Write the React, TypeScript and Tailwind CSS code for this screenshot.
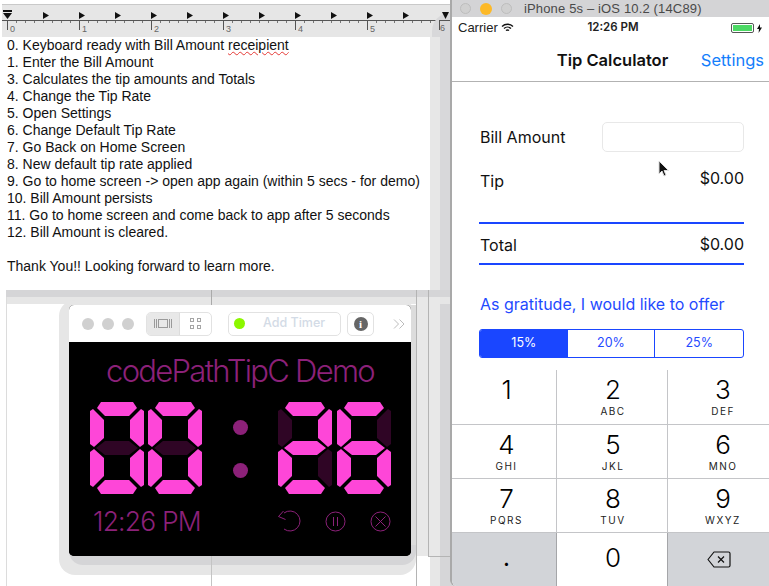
import React from "react";

const lines = [
  "1. Enter the Bill Amount",
  "3. Calculates the tip amounts and Totals",
  "4. Change the Tip Rate",
  "5. Open Settings",
  "6. Change Default Tip Rate",
  "7. Go Back on Home Screen",
  "8. New default tip rate applied",
  "9. Go to home screen -> open app again (within 5 secs - for demo)",
  "10. Bill Amount persists",
  "11. Go to home screen and come back to app after 5 seconds",
  "12. Bill Amount is cleared.",
];

const SEGS: Record<string, string> = {
  a: "7,6 11,0 43,0 47,6 39,14 15,14",
  f: "0,9 3,7 14,18 14,36 4,45 0,42",
  b: "54,9 51,7 40,18 40,36 50,45 54,42",
  g: "6,46 15,39 39,39 48,46 39,53 15,53",
  e: "0,50 4,47 14,56 14,74 3,85 0,83",
  c: "54,50 50,47 40,56 40,74 51,85 54,83",
  d: "7,86 15,78 39,78 47,86 43,92 11,92",
};

function Digit({ dim }: { dim: string }) {
  return (
    <svg width="54" height="92" viewBox="0 0 54 92" className="block">
      {Object.entries(SEGS).map(([k, p]) => (
        <polygon key={k} points={p} fill={dim.includes(k) ? "#2f0525" : "#fe46d8"} />
      ))}
    </svg>
  );
}

function Ruler() {
  const small = Array.from({ length: 49 }, (_, i) => 7 + i * 9);
  const tabs = Array.from({ length: 11 }, (_, i) => 43 + i * 36);
  return (
    <svg width="448" height="31" viewBox="0 0 448 31" className="block">
      <g transform="translate(-2,-5)">
        <rect x="2" y="20" width="448" height="1" fill="#555" />
        {small.map((x) => (
          <rect key={x} x={x} y="21" width="1" height="2" fill="#777" />
        ))}
        {[0, 1, 2, 3, 4, 5].map((i) => (
          <g key={i}>
            <rect x={7 + i * 72} y="21" width="1" height="9" fill="#555" />
            <text x={10 + i * 72} y="32" fontSize="9" fill="#666" fontFamily="Liberation Sans, sans-serif">
              {i}
            </text>
          </g>
        ))}
        {tabs.map((x) => (
          <polygon key={x} points={`${x},12 ${x + 6},15.5 ${x},19`} fill="#111" />
        ))}
        <rect x="3" y="10" width="9" height="2" fill="#111" />
        <polygon points="3,13 12,13 7.5,19" fill="#111" />
      </g>
    </svg>
  );
}

function Key({ n, l }: { n: string; l?: string }) {
  return (
    <div className="flex flex-col items-center">
      <div className="h-[33px] mt-[2px] text-[26px] leading-[35px] font-light text-black">{n}</div>
      {l && <div className="text-[10px] leading-[12px] tracking-[1.5px] text-[#222]">{l}</div>}
    </div>
  );
}

export default function App() {
  const pink = "#8c2179";
  return (
    <div className="relative w-[769px] h-[586px] overflow-hidden bg-white font-['Liberation_Sans',sans-serif]">
      {/* desktop guide */}
      <div className="absolute left-[6px] top-[290px] w-px h-[296px] bg-[#dcdcdc]" />

      {/* phone shadow */}
      <div className="absolute left-[430px] top-[6px] w-[30px] h-[580px] rounded-tl-[24px] bg-[#e7e7e7]" />
      <div className="absolute left-[440px] top-[12px] w-[20px] h-[574px] rounded-tl-[14px] bg-[#d6d6d8]" />

      {/* document window */}
      <div className="absolute left-[2px] top-0 w-[448px] h-[290px] flex flex-col bg-white rounded-b-[6px] overflow-hidden">
        <div className="h-[4px] bg-white" />
        <div className="h-px bg-[#c9c9c9]" />
        <div className="h-[32px] bg-[#e6e6e6]">
          <Ruler />
        </div>
        <div className="flex-1 pl-[5px] text-[14px] leading-[17px] text-[#111] whitespace-nowrap">
          <div>
            0. Keyboard ready with Bill Amount{" "}
            <span className="underline decoration-wavy decoration-[#e53935] decoration-1">receipient</span>
          </div>
          {lines.map((t) => (
            <div key={t}>{t}</div>
          ))}
          <div className="h-[17px]" />
          <div>Thank You!! Looking forward to learn more.</div>
        </div>
      </div>
      <div className="absolute left-[430px] top-[37px] w-[10px] h-[253px] bg-[#e7e7e7]" />
      <div className="absolute left-[440px] top-[37px] w-[10px] h-[253px] bg-[#d8d8da]" />
      <div className="absolute left-[432px] top-[13px] w-[18px] h-[24px] rounded-tl-[18px] bg-[#d8d8da]" />
      {/* ruler end: tab, tick and figure sit on the phone's shadow */}
      <svg className="absolute left-[436px] top-[10px]" width="14" height="22" viewBox="0 0 14 22">
        <rect x="3" y="10" width="11" height="1" fill="#555" />
        <rect x="3" y="11" width="1" height="9" fill="#555" />
        <polygon points="6,2 13,2 9.500,9" fill="#111" />
      </svg>
      <div className="absolute left-[440px] top-[23px] text-[9px] text-[#666] leading-[11px]">6</div>

      {/* window shadows */}
      <div className="absolute left-[6px] top-[290px] w-[446px] h-[7px] bg-[#d5d5d7]" />
      <div className="absolute left-[7px] top-[297px] w-[445px] h-[7px] bg-[#e6e6e6]" />
      <div className="absolute left-[59px] top-[300px] w-[357px] h-[275px] rounded-[16px] bg-[#e6e6e6]" />
      <div className="absolute left-[416px] top-[297px] w-[24px] h-[259px] bg-[#e8e8e8]" />
      <div className="absolute left-[69px] top-[540px] w-[347px] h-[25px] rounded-b-[14px] bg-[#d5d5d7]" />
      <div className="absolute left-[405px] top-[305px] w-[11px] h-[240px] bg-[#dcdcdc]" />
      <div className="absolute left-[416px] top-[290px] w-px h-[296px] bg-[#b4b4b4]" />
      <div className="absolute left-[428px] top-[290px] w-px h-[266px] bg-[#b4b4b4]" />
      <div className="absolute left-[428px] top-[556px] w-[24px] h-px bg-[#b4b4b4]" />
      <div className="absolute left-[211px] top-[290px] w-px h-[15px] bg-[#aaa]" />
      <div className="absolute left-[211px] top-[556px] w-px h-[30px] bg-[#c4c4c4]" />

      {/* timer window */}
      <div className="absolute left-[69px] top-[305px] w-[342px] h-[251px] rounded-[5px] overflow-hidden bg-black flex flex-col">
        <div className="h-[37px] bg-white flex items-center pl-[13px]">
          <div className="flex gap-[8px]">
            <div className="w-[12px] h-[12px] rounded-full bg-[#d0d0d0]" />
            <div className="w-[12px] h-[12px] rounded-full bg-[#d0d0d0]" />
            <div className="w-[12px] h-[12px] rounded-full bg-[#d0d0d0]" />
          </div>
          <div className="ml-[12px] w-[66px] h-[24px] rounded-[5px] border border-[#e2e2e2] flex overflow-hidden">
            <div className="w-[33px] bg-[#e8e8e8] flex items-center justify-center border-r border-[#dcdcdc]">
              <svg width="18" height="11" viewBox="0 0 18 11" fill="none" stroke="#9a9a9a" strokeWidth="1">
                <rect x="4.5" y="1.5" width="9" height="8" />
                <path d="M.5 1v9M2.5 1v9M15.5 1v9M17.5 1v9" />
              </svg>
            </div>
            <div className="flex-1 flex items-center justify-center">
              <svg width="11" height="11" viewBox="0 0 11 11" fill="none" stroke="#a5a5a5" strokeWidth="1">
                <rect x=".5" y=".5" width="3" height="3" />
                <rect x="7.5" y=".5" width="3" height="3" />
                <rect x=".5" y="7.5" width="3" height="3" />
                <rect x="7.5" y="7.5" width="3" height="3" />
              </svg>
            </div>
          </div>
          <div className="ml-[16px] w-[113px] h-[24px] rounded-[5px] border border-[#e2e2e2] flex items-center pl-[5px]">
            <div className="w-[11px] h-[11px] rounded-full bg-[#8cf700]" />
            <div className="ml-[18px] text-[12.500px] font-medium text-[#d3dbe6] font-['Inter',sans-serif]">Add Timer</div>
          </div>
          <div className="ml-[6px] w-[27px] h-[24px] rounded-[5px] border border-[#e2e2e2] flex items-center justify-center">
            <div className="w-[14px] h-[14px] rounded-full bg-[#666] text-white text-[11px] leading-[14px] text-center font-bold font-['Liberation_Serif',serif]">
              i
            </div>
          </div>
          <svg className="ml-[19px]" width="12" height="10" viewBox="0 0 12 10" fill="none" stroke="#bcbcbc" strokeWidth="1">
            <path d="M1 .5L5.500 5 1 9.500M6.500 .5L11 5 6.500 9.500" />
          </svg>
        </div>
        <div className="flex-1 bg-black flex flex-col">
          <div className="text-center text-[31px] leading-[37px] mt-[10px] font-light tracking-[-1.7px] font-['Inter',sans-serif]" style={{ color: pink }}>
            codePathTipC Demo
          </div>
          <div className="flex items-start mt-[13px] pl-[21px]">
            <Digit dim="g" />
            <div className="w-[4px]" />
            <Digit dim="g" />
            <div className="w-[76px] flex flex-col items-center pt-[18px] gap-[28px]">
              <div className="w-[15px] h-[15px] rounded-full" style={{ background: pink }} />
              <div className="w-[15px] h-[15px] rounded-full" style={{ background: pink }} />
            </div>
            <Digit dim="fc" />
            <div className="w-[5px]" />
            <Digit dim="b" />
          </div>
          <div className="flex items-center mt-[12px] pl-[24px]">
            <div className="w-[115px] text-[26.500px] leading-[30px] font-light tracking-[-0.8px] whitespace-nowrap font-['Inter',sans-serif]" style={{ color: pink }}>
              12:26 PM
            </div>
            <svg className="ml-[70px]" width="24" height="24" viewBox="0 0 24 24" fill="none" stroke={pink} strokeWidth="1">
              <path d="M6 4A10 10 0 1 1 6 20" />
              <path d="M5.500 2L.5 7.500l7 3" />
            </svg>
            <svg className="ml-[23px]" width="21" height="21" viewBox="0 0 21 21" fill="none" stroke={pink} strokeWidth="1">
              <circle cx="10.5" cy="10.5" r="9.5" />
              <path d="M8.5 6v9M12.5 6v9" />
            </svg>
            <svg className="ml-[24px]" width="21" height="21" viewBox="0 0 21 21" fill="none" stroke={pink} strokeWidth="1">
              <circle cx="10.5" cy="10.5" r="9.5" />
              <path d="M5.5 5.5l10 10M15.5 5.5l-10 10" />
            </svg>
          </div>
        </div>
      </div>

      {/* phone */}
      <div className="absolute left-[450px] top-0 w-[319px] h-[586px] flex flex-col bg-white border-l-2 border-[#a9a9a9] rounded-bl-[6px] overflow-hidden font-['Inter',sans-serif]">
        <div className="h-[17px] bg-[#d4d4d6] flex items-center pl-[8px] font-['Liberation_Sans',sans-serif]">
          <div className="w-[11px] h-[11px] rounded-full bg-[#d0d0d0] border border-[#bdbdbd]" />
          <div className="ml-[9px] w-[12px] h-[12px] rounded-full bg-[#fdb927]" />
          <div className="ml-[9px] w-[11px] h-[11px] rounded-full bg-[#d0d0d0] border border-[#bdbdbd]" />
          <div className="ml-[12px] text-[13px] leading-[17px] text-[#4a4a4a] tracking-[0.15px]">iPhone 5s – iOS 10.2 (14C89)</div>
        </div>
        <div className="h-[20px] pt-[2px] relative flex items-center px-[6px] text-[13px] text-[#222]">
          <span className="font-['Liberation_Sans',sans-serif]">Carrier</span>
          <svg className="ml-[3px]" width="13" height="10" viewBox="0 0 13 10" fill="none" stroke="#111" strokeWidth="1.4">
            <path d="M1 3.4a8 8 0 0 1 11 0M3 5.6a5 5 0 0 1 7 0M5 7.6a2.2 2.2 0 0 1 3 0" />
          </svg>
          <div className="absolute left-0 right-0 pl-[5px] text-center text-[11.5px] font-semibold">12:26 PM</div>
          <div className="ml-auto flex items-center gap-[3px] pr-[1px]">
            <div className="w-[23px] h-[10px] border border-[#555] rounded-[2px] p-px">
              <div className="h-full bg-[#4cd964]" />
            </div>
            <svg width="5" height="9" viewBox="0 0 5 9" fill="#111">
              <path d="M3 0L0 5h2L1.6 9 5 3.6H3z" />
            </svg>
          </div>
        </div>
        <div className="h-[45px] pt-[2px] flex items-center relative border-b border-[#b2b2b2]">
          <div className="absolute left-0 right-0 pl-[4px] text-center text-[16.500px] font-semibold text-[#111]">Tip Calculator</div>
          <div className="ml-auto pr-[5px] text-[16.500px] text-[#147efb]">Settings</div>
        </div>
        <div className="flex-1 flex flex-col pl-[27px] pr-[25px] text-[16px] text-[#111]">
          <div className="flex items-center justify-between mt-[40px] h-[30px]">
            <span className="pl-[1px]">Bill Amount</span>
            <div className="w-[142px] h-[30px] border border-[#e8e8e8] rounded-[5px]" />
          </div>
          <div className="flex justify-between mt-[14px] h-[28px] pl-[1px]">
            <span className="pt-[3px]">Tip</span>
            <span>$0.00</span>
          </div>
          <div className="mt-[28px] h-[2px] bg-[#1a46ff]" />
          <div className="flex justify-between h-[39px] items-center pl-[1px]">
            <span className="pt-[2px]">Total</span>
            <span className="pt-[1px]">$0.00</span>
          </div>
          <div className="h-[2px] bg-[#1a46ff]" />
          <div className="mt-[27px] h-[24px] leading-[24px] pl-[1px] text-[#1f4aff]">As gratitude, I would like to offer</div>
          <div className="mt-[13px] h-[29px] grid grid-cols-3 border border-[#1a46ff] rounded-[3px] overflow-hidden text-[12.500px] text-[#1f4aff]">
            <div className="bg-[#1a46ff] text-white flex items-center justify-center">15%</div>
            <div className="flex items-center justify-center border-r border-[#1a46ff]">20%</div>
            <div className="flex items-center justify-center">25%</div>
          </div>
        </div>
        <div className="h-[216px] grid grid-cols-[105px_111px_1fr] grid-rows-[55px_54px_54px_53px]">
          {[
            ["1", "", "pl-[5px]"],
            ["2", "ABC", "pl-[2px]"],
            ["3", "DEF", "pl-[9px]"],
            ["4", "GHI", "pl-[5px]"],
            ["5", "JKL", "pl-[2px]"],
            ["6", "MNO", "pl-[9px]"],
            ["7", "PQRS", "pl-[5px]"],
            ["8", "TUV", "pl-[2px]"],
            ["9", "WXYZ", "pl-[9px]"],
          ].map(([n, l, p], i) => (
            <div key={n} className={`${p} ${i % 3 !== 2 ? "border-r border-[#c4c5c8]" : ""} border-b border-b-[#c4c5c8]`}>
              <Key n={n} l={l} />
            </div>
          ))}
          <div className="border-r border-[#a5a6a9] bg-[#d2d4d8] flex justify-center pl-[5px]">
            <div className="text-[24px] leading-[50px] text-black">.</div>
          </div>
          <div className="border-r border-[#a5a6a9] bg-white text-center pl-[2px] text-[26px] font-light leading-[50px] text-black">0</div>
          <div className="bg-[#d2d4d8] flex items-center justify-center">
            <svg width="24" height="17" viewBox="0 0 24 17" fill="none" stroke="#111" strokeWidth="1.2">
              <path d="M7 1h14.5a1.5 1.5 0 0 1 1.5 1.5v12a1.5 1.5 0 0 1-1.5 1.5H7L1 8.5z" strokeLinejoin="round" />
              <path d="M11 5.5l6 6M17 5.5l-6 6" />
            </svg>
          </div>
        </div>
      </div>

      {/* pointer */}
      <svg className="absolute left-[658px] top-[160px]" width="12" height="18" viewBox="0 0 12 18">
        <path d="M1 1v13l3-3 2 5 2-1-2-4.500h4.500z" fill="#111" stroke="#ddd" strokeWidth="1" />
      </svg>
    </div>
  );
}
